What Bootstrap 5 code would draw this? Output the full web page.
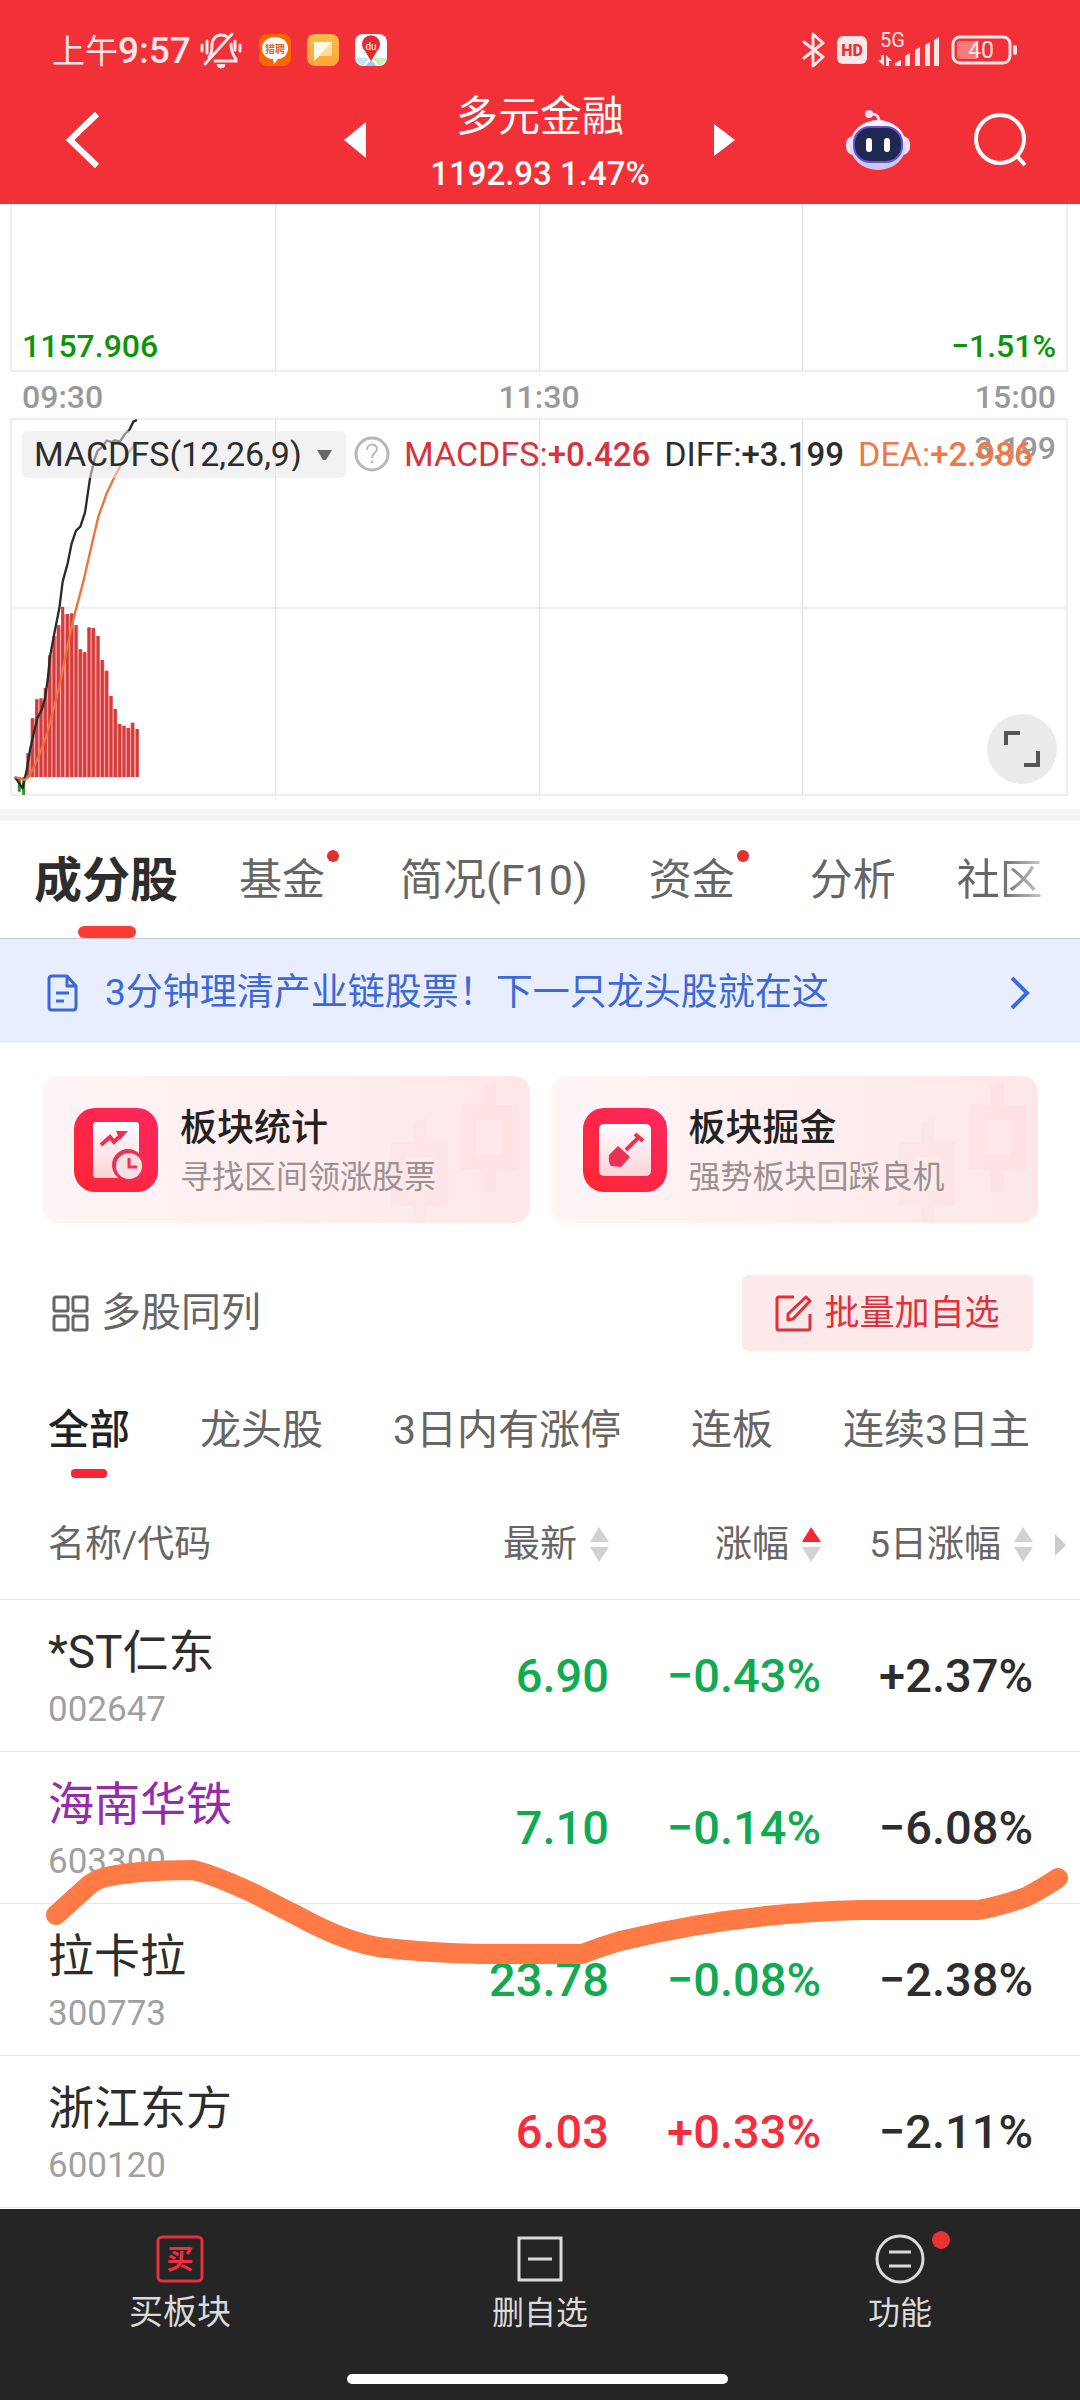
<!DOCTYPE html>
<html lang="zh-CN">
<head>
<meta charset="utf-8">
<meta name="viewport" content="width=device-width, initial-scale=1">
<title>多元金融</title>
<link rel="stylesheet" href="https://cdn.jsdelivr.net/npm/bootstrap@5.3.0/dist/css/bootstrap.min.css">
<style>
body { font-family: Roboto, "Noto Sans CJK SC", sans-serif; color: #2d2d2d; background: #fff; font-size: 36px; line-height: 1; }
button, select { font-family: inherit; line-height: 1; }
svg { display: block; flex: none; }
a { text-decoration: none; color: inherit; }
.plain-btn { background: none; border: 0; padding: 0; color: inherit; }

.top-area { background: #f23037; color: #fff; }
.status-bar { height: 84px; padding: 16px 62px 0 52px; color: #ffe6e7; }
.clock { font-size: 37px; margin-right: 8px; font-weight: 500; }
.clock span { font-size: 33px; font-weight: 400; }
.status-right { gap: 11px; }
.title-bar { height: 120px; padding: 0 52px; display: grid; grid-template-columns: 1fr auto 1fr; align-items: center; }
.title-bar .plain-btn { margin-bottom: 8px; }
.back-btn { margin-left: 12px; }
.title-block { width: 348px; text-align: center; }
.title-name { font-size: 42px; line-height: 60px; font-weight: 400; }
.title-quote { font-size: 33px; line-height: 54px; font-weight: 500; }
.title-icons { gap: 64px; }

.chart-wrap { padding: 0 12px 0 10px; }
.chart-box { border: 2px solid #eee; }
.chart-upper { height: 168px; border-top: 0; }
.chart-lower { height: 378px; }
.grid-cell + .grid-cell { border-left: 1px solid #ddd; }
.num { font-weight: 500; }
.edge-label { font-size: 32px; padding: 0 10px; color: #0c930c; }
.axis { height: 48px; padding: 2px 12px 0; margin-bottom: -2px; font-size: 32px; color: #999; }
.mid-rule { top: 50%; height: 2px; background: #eee; }
.macd-line { top: 10px; left: 10px; height: 48px; font-size: 34px; white-space: nowrap; }
.macd-line .num { font-size: 33px; }
.picker { width: 324px; height: 47px; }
.picker select { width: 100%; height: 100%; border: 0; border-radius: 6px; background: rgba(232,232,232,.55); appearance: none; padding: 0 0 0 12px; font-size: 34px; color: #2d2d2d; }
.picker-caret { right: 13px; top: 18px; }
.macd-val { margin-left: 14px; }
.peak { right: 10px; top: 12px; font-size: 32px; color: #999; }
.expand { right: 9px; bottom: 10px; width: 70px; height: 70px; border-radius: 50%; background: #ebebeb; }
.c-red { color: #d8333a; } .c-orange { color: #f07846; }

.spacer { height: 12px; background: #f4f4f4; margin-top: 13px; }
.main-tabs { height: 118px; padding-left: 34px; gap: 61px; border-bottom: 1px solid #c3c7d0; font-size: 43px; color: #666; white-space: nowrap; overflow: hidden; }
.main-tabs a { height: 117px; line-height: 119px; position: relative; }
.main-tabs .current { font-size: 48px; font-weight: 700; color: #2d2d2d; }
.main-tabs .current::after { content: ""; position: absolute; bottom: 0; left: 50%; margin-left: -28px; width: 58px; height: 12px; border-radius: 6px; background: #fa3c32; }
.main-tabs .dotted { padding-right: 14px; }
.main-tabs .dotted::after { content: ""; position: absolute; right: 0; top: 29px; width: 12px; height: 12px; border-radius: 50%; background: #e03030; }
.fading { background: linear-gradient(90deg, #666 50%, #ccc); -webkit-background-clip: text; background-clip: text; color: transparent !important; }

.notice { height: 104px; background: #e9eefe; color: #3c69d8; padding: 3px 50px 0 47px; font-size: 37px; }
.notice span { margin-left: 27px; }
.promos { padding: 33px 42px 0; gap: 21px; }
.promo { flex: 1; height: 147px; padding-left: 32px; border-radius: 16px; background: linear-gradient(90deg, #fff5f6, #fee7e9); position: relative; overflow: hidden; }
.promo > svg.candles { position: absolute; right: 11px; top: 0; }
.promo-text { margin-left: 22px; padding-top: 4px; position: relative; }
.promo-title { font-size: 37px; line-height: 50px; font-weight: 500; color: #222; }
.promo-sub { font-size: 32px; line-height: 46px; color: #9c9192; }

.tools { padding: 52px 47px 0 52px; color: #666; }
.tools-multi { font-size: 40px; gap: 12px; }
.add-btn { height: 76px; width: 291px; border-radius: 6px; background: #fde9ea; color: #e0303c; font-size: 35px; gap: 12px; }

.sub-tabs { padding: 0 48px; margin-top: 38px; height: 100px; gap: 70px; font-size: 41px; color: #666; white-space: nowrap; overflow: hidden; }
.sub-tabs a { position: relative; height: 90px; line-height: 82px; }
.sub-tabs .current { color: #222; font-weight: 500; }
.sub-tabs .current::after { content: ""; position: absolute; left: 50%; margin-left: -18px; top: 80px; width: 36px; height: 9px; border-radius: 4px; background: #fb2437; }

.quotes { width: 100%; table-layout: fixed; margin: 0; }
.quotes th, .quotes td { padding: 0; border-bottom: 1px solid #e6e6e6; vertical-align: middle; text-align: right; }
.quotes th { height: 110px; padding-top: 2px; font-size: 37px; font-weight: 400; color: #666; position: relative; white-space: nowrap; }
.quotes td { height: 152px; font-size: 47px; font-weight: 500; }
.quotes th:first-child, .quotes td:first-child { text-align: left; padding-left: 48px; }
.quotes td:first-child { padding-top: 6px; }
.quotes th:last-child, .quotes td:last-child { padding-right: 47px; }
.quotes .mid { width: 212px; }
.quotes .last { width: 259px; }
.sort { gap: 13px; }
.more-cols { position: absolute; right: 14px; top: 45px; }
.stock { font-size: 46px; line-height: 63px; font-weight: 400; display: block; }
.code { font-size: 35px; line-height: 51px; font-weight: 400; color: #a0a0a0; display: block; }
.seen { color: #962cab; }
.down { color: #10aa50; } .up { color: #f52d3c; }
.stroke { position: absolute; left: 0; top: 362px; width: 100%; height: 140px; pointer-events: none; }

.bottom-bar { background: #252525; color: #dadada; height: 191px; font-size: 32px; margin-top: 2px; }
.bottom-bar a { flex: 1; padding-top: 25px; }
.bottom-bar .label { line-height: 40px; margin-top: 9px; }
.bottom-bar .buy .label { font-size: 34px; line-height: 38px; }
.fn-dot { position: absolute; width: 18px; height: 18px; border-radius: 50%; background: #ea3232; right: -25px; top: -3px; }
.home-pill { width: 381px; height: 10px; border-radius: 5px; background: #fff; margin-bottom: 16px; }
.home-row { padding-right: 6px; }
</style>
<script src="https://cdn.jsdelivr.net/npm/bootstrap@5.3.0/dist/js/bootstrap.bundle.min.js"></script>
</head>
<body class="d-flex flex-column min-vh-100">
<header class="top-area">
  <div class="status-bar d-flex justify-content-between align-items-center">
    <div class="d-flex align-items-center">
      <div class="clock"><span>上午</span>9:57</div>
      <svg width="44" height="38" viewBox="0 0 44 38" fill="none" stroke="#ffe6e7" stroke-width="3" stroke-linecap="round"><path d="M10 26c3-3 3-8 3-12 0-6 4-10 9-10 3 0 5 1 7 2M32 13c0 6 1 10 5 15v2H16M6 33L33 3M3 14v6M8 10v12M41 14v6M36 10v9"/><path d="M18 34a4 3 0 0 0 8 0z" fill="#ffe6e7" stroke-width="1"/></svg>
      <svg class="ms-3" width="32" height="32" viewBox="0 0 32 32"><rect width="32" height="32" rx="8" fill="#fd6500"/><path d="M16 3c8 0 13 5 13 11 0 7-5 11-10 11l-4 5-1-5C7 25 3 20 3 14 3 8 8 3 16 3z" fill="#fff"/><text x="16" y="19" font-size="10" font-weight="700" text-anchor="middle" fill="#e06a10">猎聘</text></svg>
      <svg class="ms-3" width="32" height="32" viewBox="0 0 32 32"><defs><linearGradient id="gy" x2="0" y2="1"><stop stop-color="#ffbd4a"/><stop offset="1" stop-color="#ffa638"/></linearGradient></defs><rect width="32" height="32" rx="8" fill="url(#gy)"/><path d="M7 8h18v14H12l-5 5z" fill="#ffdc9c"/><path d="M7 8h18L7 27z" fill="#fff8e8"/></svg>
      <svg class="ms-3" width="32" height="32" viewBox="0 0 32 32"><rect width="32" height="32" rx="8" fill="#fff"/><path d="M1 24h13l-5 7H7q-6-1-6-7z" fill="#bfe5fa"/><path d="M18 24h13q0 6-6 7h-2z" fill="#d0eeb8"/><path d="M16 26l6 6H10z" fill="#8ed4fa"/><path d="M16 27l-6-10A9 9 0 1 1 22 17z" fill="#e22a33"/><text x="16" y="16" font-size="10" text-anchor="middle" fill="#fff">du</text></svg>
    </div>
    <div class="status-right d-flex align-items-center">
      <svg width="24" height="38" viewBox="0 0 24 38" fill="none" stroke="#ffe6e7" stroke-width="3" stroke-linejoin="round" stroke-linecap="round"><path d="M2 11l19 15-10 9V3l10 9L2 27"/></svg>
      <svg width="30" height="28" viewBox="0 0 30 28"><rect width="30" height="28" rx="6" fill="#ffe6e7"/><text x="15" y="20" font-size="16" font-weight="900" text-anchor="middle" fill="#e9303a">HD</text></svg>
      <svg width="62" height="48" viewBox="0 -6 62 48"><text x="2" y="15" font-size="20" fill="#ffe6e7">5G</text><g fill="#ffe6e7"><path d="M3 23h3v11L0 28h3zM8 34V23l6 6h-3v5z"/><path d="M17 34v-3l6-3v6zM27 24l5-3v13h-5zM37 18l5-3v19h-5zM47 13l5-3v24h-5zM56 8l5-3v29h-5z"/></g></svg>
      <svg width="67" height="30" viewBox="0 0 67 30"><rect x="2" y="2" width="57" height="26" rx="7" fill="none" stroke="#ffe6e7" stroke-width="3"/><rect x="6" y="6" width="21" height="18" rx="3" fill="#f9797e"/><rect x="62" y="10" width="4" height="10" rx="2" fill="#ffe6e7"/><text x="30" y="23" font-size="23" text-anchor="middle" fill="#ffe6e7">40</text></svg>
    </div>
  </div>
  <div class="title-bar">
    <button class="plain-btn back-btn text-start" aria-label="返回"><svg width="36" height="60" viewBox="0 0 36 60" fill="none" stroke="#fff" stroke-width="6"><path d="M33 4L6 30l27 26"/></svg></button>
    <div class="d-flex align-items-center">
      <button class="plain-btn" aria-label="上一个"><svg width="22" height="36" viewBox="0 0 22 36"><path d="M22 0v36L0 18z" fill="#fff"/></svg></button>
      <div class="title-block"><h1 class="title-name m-0">多元金融</h1><div class="title-quote">1192.93 1.47%</div></div>
      <button class="plain-btn" aria-label="下一个"><svg width="22" height="34" viewBox="0 0 22 34"><path d="M0 1v32l21-16z" fill="#fff"/></svg></button>
    </div>
    <div class="title-icons d-flex justify-content-end align-items-center">
      <button class="plain-btn" aria-label="智能助手"><svg width="64" height="62" viewBox="0 0 64 62"><defs><linearGradient id="rb" x2="0" y2="1"><stop stop-color="#fafaff"/><stop offset="1" stop-color="#c6c4f0"/></linearGradient></defs><path d="M24 5q9-1 9 8" fill="none" stroke="#f6e4f4" stroke-width="3"/><circle cx="23" cy="5" r="4" fill="#f2e2f4"/><rect x="0" y="27" width="64" height="19" rx="8" fill="#e6e4fa"/><ellipse cx="32" cy="36" rx="28" ry="25" fill="url(#rb)"/><rect x="8" y="18" width="48" height="35" rx="16" fill="#1e2850" stroke="#6a4ed8" stroke-width="2"/><rect x="20" y="29" width="6" height="14" rx="3" fill="#fff"/><rect x="38" y="29" width="6" height="14" rx="3" fill="#fff"/></svg></button>
      <button class="plain-btn" aria-label="搜索"><svg width="54" height="54" viewBox="0 0 54 54" fill="none" stroke="#fff" stroke-width="4"><circle cx="26" cy="26" r="24"/><path d="M42 42l9 10"/></svg></button>
    </div>
  </div>
</header>

<main>
  <section class="chart-wrap">
    <div class="chart-box chart-upper position-relative">
      <div class="d-flex h-100"><div class="grid-cell flex-fill"></div><div class="grid-cell flex-fill"></div><div class="grid-cell flex-fill"></div><div class="grid-cell flex-fill"></div></div>
      <div class="edge-label num position-absolute start-0 end-0 bottom-0 pb-2 d-flex justify-content-between"><span>1157.906</span><span>−1.51%</span></div>
    </div>
    <div class="axis num d-flex justify-content-between align-items-center"><span>09:30</span><span>11:30</span><span>15:00</span></div>
    <div class="chart-box chart-lower position-relative">
      <div class="d-flex h-100"><div class="grid-cell flex-fill"></div><div class="grid-cell flex-fill"></div><div class="grid-cell flex-fill"></div><div class="grid-cell flex-fill"></div></div>
      <div class="mid-rule position-absolute start-0 end-0"></div>
      <svg class="position-absolute top-0 start-0" width="140" height="376" viewBox="36 60 420 1128" overflow="visible">
        <path fill="#fba0a0" d="M79 1131V1060h13V955h13v-57h26v-32h13V766h13v-58h13v-32h13v-34h39v34h13v72h13v9h13v-73h26v24h13v72h13v32h13v76h13v39h13v45h13v5h13v7h13v-16h13v19h10v144z"/>
        <path fill="none" stroke="#d13c3c" stroke-width="9" d="M84 1131V1060M97 1131V955M110 1131V898M123 1131V895M136 1131V864M149 1131V766M162 1131V708M175 1131V676M188 1131V620M202 1131V642M215 1131V640M228 1131V676M241 1131V748M254 1131V757M267 1131V682M280 1131V684M294 1131V708M307 1131V780M320 1131V812M333 1131V888M346 1131V927M359 1131V972M372 1131V977M385 1131V984M398 1131V968M412 1131V987"/>
        <path fill="none" stroke="#35962a" stroke-width="9" d="M58 1131V1175M71 1131V1185"/>
        <path fill="none" stroke="#2a2a2a" stroke-width="7" stroke-linejoin="round" d="M45 1131L68 1165 80 1110 90 1050 100 1005 112 955 125 930 135 895 143 840 150 770 165 690 178 625 188 545 203 490 215 430 228 392 241 380 255 338 270 235 283 180 293 152 308 140 320 122 335 126 345 121 360 124 375 102 388 90 400 65 411 60"/>
        <path fill="none" stroke="#f2703c" stroke-width="7" stroke-linejoin="round" d="M45 1131L72 1140 85 1132 100 1105 120 1060 140 1005 160 930 180 850 200 750 222 650 250 545 275 435 295 350 320 280 345 228 365 190 385 160 410 125"/>
      </svg>
      <div class="peak num position-absolute">3.199</div>
      <div class="macd-line position-absolute d-flex align-items-center">
        <div class="picker position-relative">
          <select aria-label="指标"><option>MACDFS(12,26,9)</option></select>
          <svg class="picker-caret position-absolute pe-none" width="17" height="12" viewBox="0 0 17 12"><path d="M1 1h15L10 11H7z" fill="#666"/></svg>
        </div>
        <button class="plain-btn ms-2" aria-label="说明"><svg width="36" height="36" viewBox="0 0 36 36" fill="none" stroke="#b8b8b8"><circle cx="18" cy="18" r="16" stroke-width="3"/><path d="M13 14c0-7 10-7 10-1 0 4-5 4-5 9" stroke-width="2"/><circle cx="18" cy="26" r="1" stroke-width="1" fill="#b8b8b8"/></svg></button>
        <span class="macd-val c-red">MACDFS:<span class="num">+0.426</span></span>
        <span class="macd-val">DIFF:<span class="num">+3.199</span></span>
        <span class="macd-val c-orange">DEA:<span class="num">+2.986</span></span>
      </div>
      <button class="plain-btn expand position-absolute d-flex align-items-center justify-content-center" aria-label="全屏"><svg width="36" height="36" viewBox="0 0 36 36" fill="none" stroke="#555" stroke-width="4"><path d="M2 14V2h14M34 20v14H20"/></svg></button>
    </div>
  </section>

  <div class="spacer"></div>
  <nav class="main-tabs d-flex">
    <a href="#" class="current">成分股</a><a href="#" class="dotted">基金</a><a href="#">简况(F10)</a><a href="#" class="dotted">资金</a><a href="#">分析</a><a href="#" class="fading">社区</a>
  </nav>
  <a href="#" class="notice d-flex align-items-center">
    <svg width="31" height="38" viewBox="0 0 31 38" fill="none" stroke="#3c69d8" stroke-width="3" stroke-linejoin="round"><path d="M20 2H5Q2 2 2 5v28q0 3 3 3h21q3 0 3-3V12zM20 2v10h9M9 19h13M9 27h8"/></svg>
    <span>3分钟理清产业链股票！下一只龙头股就在这</span>
    <svg class="ms-auto" width="20" height="34" viewBox="0 0 20 34" fill="none" stroke="#3c69e8" stroke-width="4"><path d="M2 2l15 15L2 32"/></svg>
  </a>

  <section class="promos d-flex">
    <a href="#" class="promo d-flex align-items-center">
      <svg class="candles" width="128" height="147" viewBox="0 0 128 147" fill="#fd8890" fill-opacity=".05"><path fill-rule="evenodd" d="M22 47l13-5v24h21v64H35v17H22v-17H0V66h22zM15 81v34h27V81zM91 11l14-5v23h22v65h-22v22H91V94H70V29h21zM85 44v35h27V44z"/></svg>
      <svg width="84" height="84" viewBox="0 0 84 84"><defs><linearGradient id="ic" x1="1" x2="0" y2="1"><stop stop-color="#ff2560"/><stop offset="1" stop-color="#fd2733"/></linearGradient><linearGradient id="pg" x2="0" y2="1"><stop stop-color="#fff"/><stop offset="1" stop-color="#fdd3d9"/></linearGradient></defs><rect width="84" height="84" rx="21" fill="url(#ic)"/><rect x="19" y="14" width="46" height="56" rx="3" fill="url(#pg)"/><path d="M27 37l9-8 4 5 8-8" fill="none" stroke="#ee3054" stroke-width="4"/><path d="M42 23h12l-8 9z" fill="#ee3054"/><circle cx="54" cy="57" r="16" fill="#ee3054"/><circle cx="55" cy="58" r="13" fill="#fde0e4"/><path d="M55 50v9h8" fill="none" stroke="#ee3054" stroke-width="3"/></svg>
      <div class="promo-text"><div class="promo-title">板块统计</div><div class="promo-sub">寻找区间领涨股票</div></div>
    </a>
    <a href="#" class="promo d-flex align-items-center">
      <svg class="candles" width="128" height="147" viewBox="0 0 128 147" fill="#fd8890" fill-opacity=".05"><path fill-rule="evenodd" d="M22 47l13-5v24h21v64H35v17H22v-17H0V66h22zM15 81v34h27V81zM91 11l14-5v23h22v65h-22v22H91V94H70V29h21zM85 44v35h27V44z"/></svg>
      <svg width="84" height="84" viewBox="0 0 84 84"><rect width="84" height="84" rx="21" fill="url(#ic)"/><rect x="16" y="16" width="52" height="52" rx="5" fill="url(#pg)"/><path d="M43 42l14-14M52 26l8 7" stroke="#ee3054" stroke-width="4" fill="none"/><path d="M35 38l12 11-9 10-10-1q-3-4-2-11z" fill="#ee3054"/></svg>
      <div class="promo-text"><div class="promo-title">板块掘金</div><div class="promo-sub">强势板块回踩良机</div></div>
    </a>
  </section>

  <section class="tools d-flex justify-content-between align-items-center">
    <button class="plain-btn tools-multi d-flex align-items-center">
      <svg width="37" height="37" viewBox="0 0 37 37" fill="none" stroke="#666" stroke-width="3"><rect x="2" y="2" width="14" height="14" rx="2"/><rect x="21" y="2" width="14" height="14" rx="2"/><rect x="2" y="21" width="14" height="14" rx="2"/><rect x="21" y="21" width="14" height="14" rx="2"/></svg>多股同列
    </button>
    <button class="plain-btn add-btn d-flex align-items-center justify-content-center">
      <svg width="37" height="37" viewBox="0 0 37 37" fill="none" stroke="#e0303c" stroke-width="3" stroke-linejoin="round"><path d="M19 2H4Q2 2 2 4v29q0 2 2 2h29q2 0 2-2V19M13 25v-6L31 2l4 4-17 18z"/></svg>批量加自选
    </button>
  </section>

  <nav class="sub-tabs d-flex">
    <a href="#" class="current">全部</a><a href="#">龙头股</a><a href="#">3日内有涨停</a><a href="#">连板</a><a href="#">连续3日主</a>
  </nav>

  <div class="position-relative">
    <table class="quotes">
      <colgroup><col><col class="mid"><col class="mid"><col class="last"></colgroup>
      <thead><tr>
        <th>名称/代码</th>
        <th><button class="plain-btn sort d-inline-flex align-items-center">最新<svg width="19" height="36" viewBox="0 0 19 36" fill="#d2d2d2"><path d="M9 0l10 15H0zM0 20h19L9 35z"/></svg></button></th>
        <th><button class="plain-btn sort d-inline-flex align-items-center">涨幅<svg width="19" height="36" viewBox="0 0 19 36" fill="#d2d2d2"><path d="M9 0l10 15H0z" fill="#fb2437"/><path d="M0 20h19L9 35z"/></svg></button></th>
        <th><button class="plain-btn sort d-inline-flex align-items-center">5日涨幅<svg width="19" height="36" viewBox="0 0 19 36" fill="#d2d2d2"><path d="M9 0l10 15H0zM0 20h19L9 35z"/></svg></button><svg class="more-cols" width="11" height="22" viewBox="0 0 11 22"><path d="M0 0l11 11L0 22z" fill="#ccc"/></svg></th>
      </tr></thead>
      <tbody>
        <tr><td><span class="stock">*ST仁东</span><span class="code">002647</span></td><td class="down">6.90</td><td class="down">−0.43%</td><td>+2.37%</td></tr>
        <tr><td><span class="stock seen">海南华铁</span><span class="code">603300</span></td><td class="down">7.10</td><td class="down">−0.14%</td><td>−6.08%</td></tr>
        <tr><td><span class="stock">拉卡拉</span><span class="code">300773</span></td><td class="down">23.78</td><td class="down">−0.08%</td><td>−2.38%</td></tr>
        <tr><td><span class="stock">浙江东方</span><span class="code">600120</span></td><td class="up">6.03</td><td class="up">+0.33%</td><td>−2.11%</td></tr>
      </tbody>
    </table>
    <!-- freehand marker line over the list -->
    <svg class="stroke" viewBox="0 1850 1080 140" preserveAspectRatio="none" fill="none" stroke="#ff7a45" stroke-width="20" stroke-linecap="round" stroke-linejoin="round"><path d="M56 1914L88 1885Q96 1878 106 1876 138 1869 193 1869 212 1873 255 1893 278 1905 296 1914 348 1943 386 1947 430 1952 482 1953H582Q600 1946 620 1940 735 1912 861 1909H978Q1000 1905 1026 1896 1045 1886 1058 1877"/></svg>
  </div>
</main>

<footer class="bottom-bar d-flex flex-column mt-auto">
  <nav class="d-flex text-center flex-fill">
    <a href="#" class="buy d-flex flex-column align-items-center"><svg width="50" height="50" viewBox="0 0 50 50"><rect x="3" y="3" width="44" height="44" rx="4" fill="none" stroke="#e8303a" stroke-width="3"/><text x="25" y="35" font-size="27" font-weight="700" text-anchor="middle" fill="#f52d3c">买</text></svg><span class="label">买板块</span></a>
    <a href="#" class="d-flex flex-column align-items-center"><svg width="50" height="50" viewBox="0 0 50 50" fill="none" stroke="#dadada" stroke-width="3"><path d="M4 4h42v42H4zM13 25h24"/></svg><span class="label">删自选</span></a>
    <a href="#" class="d-flex flex-column align-items-center"><span class="position-relative"><svg width="50" height="50" viewBox="0 0 50 50" fill="none" stroke="#dadada" stroke-width="3"><circle cx="25" cy="25" r="23"/><path d="M14 18h22M14 32h22"/></svg><span class="fn-dot"></span></span><span class="label">功能</span></a>
  </nav>
  <div class="home-row d-flex justify-content-center"><div class="home-pill"></div></div>
</footer>
</body>
</html>
